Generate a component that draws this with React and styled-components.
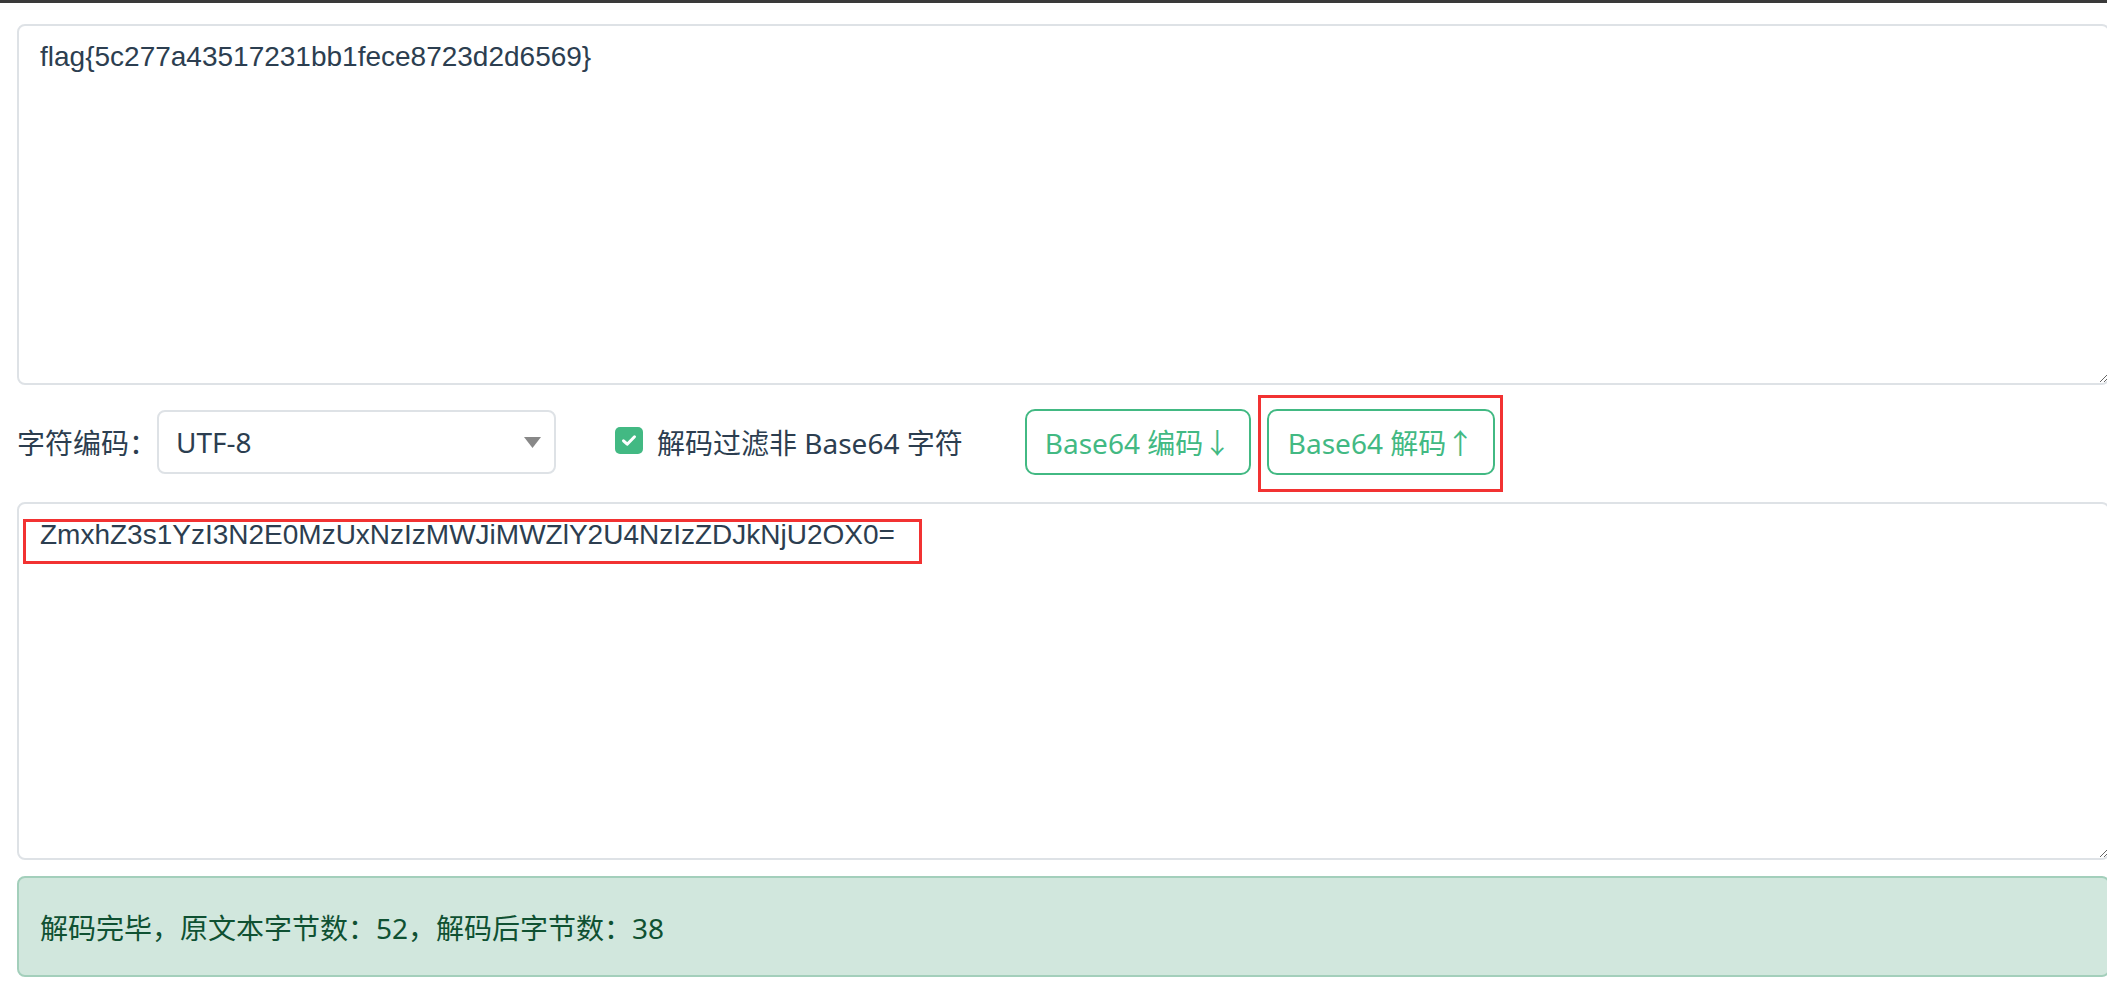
import React from "react";
import styled, { createGlobalStyle } from "styled-components";

const Global = createGlobalStyle`
  html, body { margin: 0; padding: 0; background: #fff; overflow: hidden; }
  body { font-family: "Noto Sans", "Noto Sans CJK SC", sans-serif; color: #2c3e50; }
  * { box-sizing: border-box; }
`;

const TopBar = styled.div`
  height: 3px;
  background: #3a3a3a;
`;

const Page = styled.div`
  width: 2093px;
  margin-left: 17px;
  padding-top: 21px;
  display: flex;
  flex-direction: column;
`;

const Field = styled.div`
  position: relative;
  display: flex;
`;

const TextArea = styled.textarea`
  display: block;
  width: 100%;
  height: ${(p) => p.$h}px;
  margin: 0;
  padding: 10px 21px;
  border: 2px solid #dee2e6;
  border-radius: 8px;
  font-family: "Liberation Sans", Arial, sans-serif;
  font-size: 28px;
  line-height: 42px;
  color: #2c3e50;
  background: #fff;
  resize: vertical;
  outline: none;
`;

const Mark = styled.div`
  position: absolute;
  left: 6px;
  top: 17px;
  width: 899px;
  height: 45px;
  border: 3px solid #f23232;
  pointer-events: none;
`;

const Toolbar = styled.div`
  display: flex;
  align-items: center;
  height: 66px;
  margin: 24px 0 27px;
  font-size: 28px;
`;

const Label = styled.span`
  width: 140px;
  white-space: nowrap;
  font-family: "Noto Sans", "Noto Sans CJK SC", sans-serif;
  font-size: 28px;
  color: #2c3e50;
`;

const Select = styled.div`
  width: 399px;
  height: 64px;
  display: flex;
  align-items: center;
  justify-content: space-between;
  padding: 0 13px 0 17px;
  border: 2px solid #dee2e6;
  border-radius: 8px;
  font-size: 28px;
  color: #2c3e50;
`;

const CheckGroup = styled.label`
  width: 410px;
  margin-left: 59px;
  display: flex;
  align-items: center;
  gap: 14px;
  white-space: nowrap;
  color: #2c3e50;
  font-size: 28px;
`;

const Box = styled.span`
  width: 28px;
  height: 27px;
  border-radius: 5px;
  background: #42b983;
  display: flex;
  align-items: center;
  justify-content: center;
  margin-top: -3px;
`;

const Buttons = styled.div`
  display: flex;
  gap: 16px;
`;

const Btn = styled.button`
  position: relative;
  width: ${(p) => p.$w}px;
  height: 66px;
  padding: 0;
  border: 2px solid #42b983;
  border-radius: 10px;
  background: #fff;
  color: #42b983;
  font-family: "Noto Sans", "Noto Sans CJK SC", sans-serif;
  font-size: 28px;
  white-space: nowrap;
  cursor: pointer;

  ${(p) =>
    p.$marked &&
    `
    &::after {
      content: "";
      position: absolute;
      top: -16px;
      bottom: -19px;
      left: -11px;
      right: -10px;
      border: 3px solid #f23232;
      pointer-events: none;
    }
  `}
`;

const Alert = styled.div`
  margin-top: 16px;
  height: 101px;
  display: flex;
  align-items: center;
  padding: 0 21px;
  background: #d1e7dd;
  border: 2px solid #a3cfbb;
  border-radius: 8px;
  color: #0f5132;
  font-size: 28px;
`;

export default function App() {
  return (
    <>
      <Global />
      <TopBar />
      <Page>
        <Field>
          <TextArea $h={361} readOnly defaultValue="flag{5c277a43517231bb1fece8723d2d6569}" />
        </Field>
        <Toolbar>
          <Label>字符编码：</Label>
          <Select>
            <span>UTF-8</span>
            <svg width="17" height="11" viewBox="0 0 17 11">
              <path d="M0 0 L17 0 L8.5 11 Z" fill="#888" />
            </svg>
          </Select>
          <CheckGroup>
            <Box>
              <svg width="16" height="13" viewBox="0 0 16 13">
                <path d="M2.5 6.8 L6.2 10.2 L13.5 2.8" fill="none" stroke="#fff" strokeWidth="3" strokeLinecap="round" strokeLinejoin="round" />
              </svg>
            </Box>
            <span>解码过滤非 Base64 字符</span>
          </CheckGroup>
          <Buttons>
            <Btn $w={226}>Base64 编码↓</Btn>
            <Btn $w={228} $marked>Base64 解码↑</Btn>
          </Buttons>
        </Toolbar>
        <Field>
          <TextArea $h={358} readOnly defaultValue="ZmxhZ3s1YzI3N2E0MzUxNzIzMWJiMWZlY2U4NzIzZDJkNjU2OX0=" />
          <Mark />
        </Field>
        <Alert>解码完毕，原文本字节数：52，解码后字节数：38</Alert>
      </Page>
    </>
  );
}
